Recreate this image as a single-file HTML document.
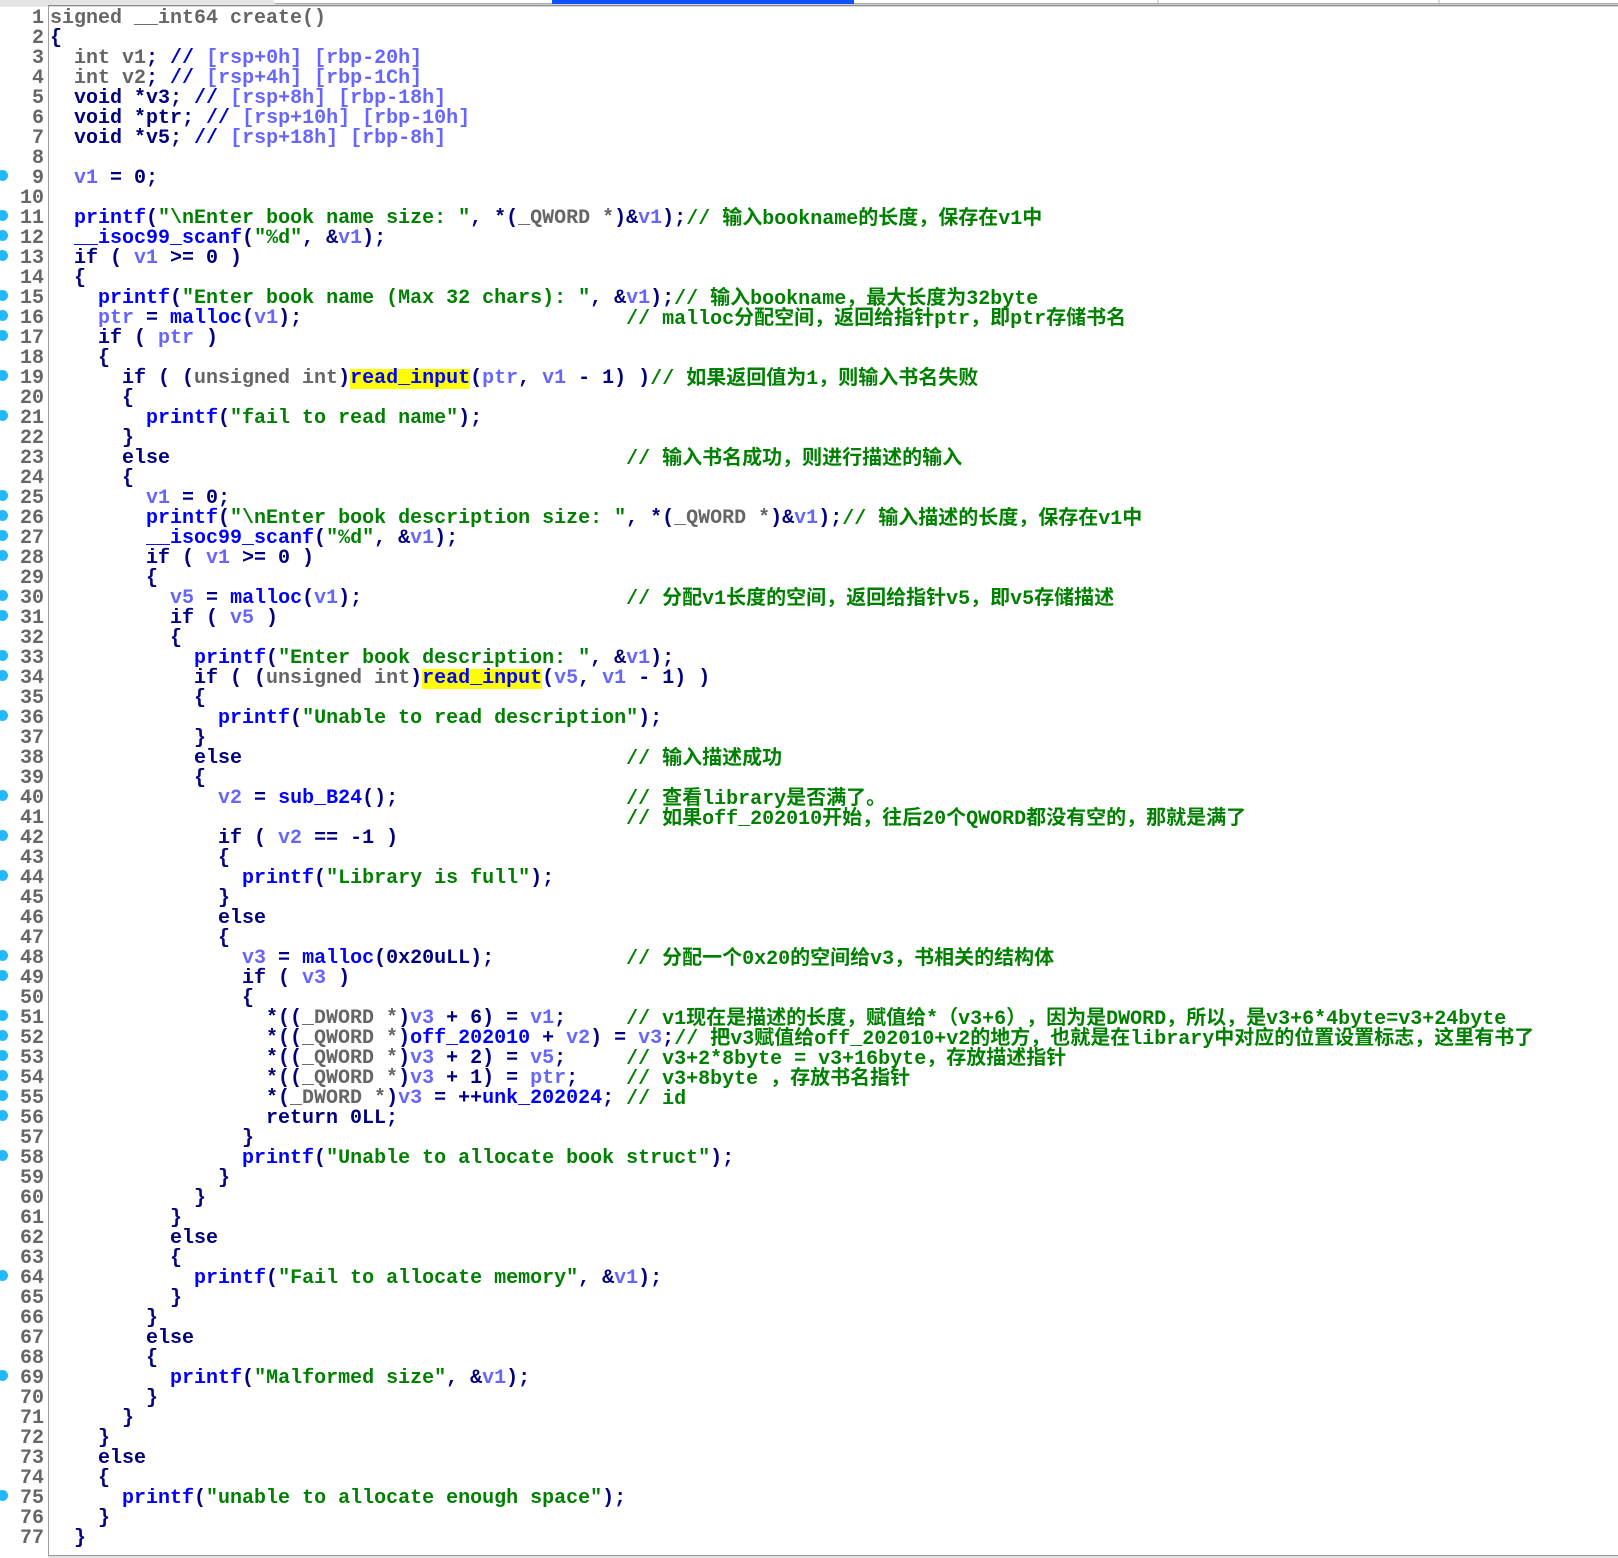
<!DOCTYPE html>
<html lang="zh">
<head>
<meta charset="utf-8">
<title>create</title>
<style>
html,body{margin:0;padding:0;background:#fff}
body{width:1618px;height:1558px;position:relative;overflow:hidden;font:bold 20px/20px "Liberation Mono","Noto Sans CJK SC",monospace;color:#000080;text-spacing-trim:space-all;font-kerning:none}
.bar{position:absolute;left:0;top:0;background:#e4e4e4}
.tab{position:absolute;height:4px;top:0}
.h{position:absolute;left:0;width:1618px;height:1px}
.sep{position:absolute;top:0;width:2px;height:3px;background:#ddd}
.gut{position:absolute;left:48px;top:6px;width:1px;height:1549px;background:#a0a0a0}
.bot{position:absolute;left:48px;top:1555px;width:1570px;height:3px;background:#e2e2e2;border-top:1px solid #999;box-sizing:border-box}
#c{position:absolute;left:50px;top:9px;width:1568px}
p{margin:0;height:20px;line-height:20px;white-space:pre;position:relative}
p>em{position:absolute;left:-50px;width:44px;text-align:right;font-style:normal;color:#666}
.d::before{content:"";position:absolute;left:-53px;top:1px;width:11px;height:11px;border-radius:50%;background:#22b8fb}
i{font-style:normal}
.g{color:#666;font-weight:bold}
.b{color:#0000ff}
.v{color:#6666ff}
.s{color:#008000}
.c{position:relative;top:1px}
.k{color:#0000cc}
.y{background:#ffff00;display:inline-block;height:20px;line-height:20px;vertical-align:top}
</style>
</head>
<body>
<div class="h" style="top:3px;background:#a8a8a8"></div>
<div class="h" style="top:4px;background:#d0d0d0"></div>
<div class="h" style="top:5px;background:#8c8c8c"></div>
<div class="h" style="top:6px;background:#d8d8d8"></div>
<div class="bar" style="width:48px;height:7px"></div>
<div class="bar" style="width:275px;height:5px;border-top-right-radius:3px"></div>
<div class="tab" style="left:552px;width:302px;background:#0f52ff"></div>
<div class="sep" style="left:1157px"></div>
<div class="sep" style="left:1438px"></div>
<div class="gut"></div>
<div class="bot"></div>
<div id="c">
<p><em>1</em><i class="g">signed __int64 create()</i></p>
<p><em>2</em>{</p>
<p><em>3</em>  <i class="g">int v1</i>; <i class="k">//</i> <i class="v">[rsp+0h] [rbp-20h]</i></p>
<p><em>4</em>  <i class="g">int v2</i>; <i class="k">//</i> <i class="v">[rsp+4h] [rbp-1Ch]</i></p>
<p><em>5</em>  void *v3; <i class="k">//</i> <i class="v">[rsp+8h] [rbp-18h]</i></p>
<p><em>6</em>  void *ptr; <i class="k">//</i> <i class="v">[rsp+10h] [rbp-10h]</i></p>
<p><em>7</em>  void *v5; <i class="k">//</i> <i class="v">[rsp+18h] [rbp-8h]</i></p>
<p><em>8</em></p>
<p class="d"><em>9</em>  <i class="v">v1</i> = 0;</p>
<p><em>10</em></p>
<p class="d"><em>11</em>  <i class="b">printf</i>(<i class="s">"\nEnter book name size: "</i>, *(<i class="g">_QWORD *</i>)&amp;<i class="v">v1</i>);<i class="s c">// 输入bookname的长度，保存在v1中</i></p>
<p class="d"><em>12</em>  <i class="b">__isoc99_scanf</i>(<i class="s">"%d"</i>, &amp;<i class="v">v1</i>);</p>
<p class="d"><em>13</em>  if ( <i class="v">v1</i> &gt;= 0 )</p>
<p><em>14</em>  {</p>
<p class="d"><em>15</em>    <i class="b">printf</i>(<i class="s">"Enter book name (Max 32 chars): "</i>, &amp;<i class="v">v1</i>);<i class="s c">// 输入bookname，最大长度为32byte</i></p>
<p class="d"><em>16</em>    <i class="v">ptr</i> = <i class="b">malloc</i>(<i class="v">v1</i>);                           <i class="s c">// malloc分配空间，返回给指针ptr，即ptr存储书名</i></p>
<p class="d"><em>17</em>    if ( <i class="v">ptr</i> )</p>
<p><em>18</em>    {</p>
<p class="d"><em>19</em>      if ( (<i class="g">unsigned int</i>)<i class="b y">read_input</i>(<i class="v">ptr</i>, <i class="v">v1</i> - 1) )<i class="s c">// 如果返回值为1，则输入书名失败</i></p>
<p><em>20</em>      {</p>
<p class="d"><em>21</em>        <i class="b">printf</i>(<i class="s">"fail to read name"</i>);</p>
<p><em>22</em>      }</p>
<p><em>23</em>      else                                      <i class="s c">// 输入书名成功，则进行描述的输入</i></p>
<p><em>24</em>      {</p>
<p class="d"><em>25</em>        <i class="v">v1</i> = 0;</p>
<p class="d"><em>26</em>        <i class="b">printf</i>(<i class="s">"\nEnter book description size: "</i>, *(<i class="g">_QWORD *</i>)&amp;<i class="v">v1</i>);<i class="s c">// 输入描述的长度，保存在v1中</i></p>
<p class="d"><em>27</em>        <i class="b">__isoc99_scanf</i>(<i class="s">"%d"</i>, &amp;<i class="v">v1</i>);</p>
<p class="d"><em>28</em>        if ( <i class="v">v1</i> &gt;= 0 )</p>
<p><em>29</em>        {</p>
<p class="d"><em>30</em>          <i class="v">v5</i> = <i class="b">malloc</i>(<i class="v">v1</i>);                      <i class="s c">// 分配v1长度的空间，返回给指针v5，即v5存储描述</i></p>
<p class="d"><em>31</em>          if ( <i class="v">v5</i> )</p>
<p><em>32</em>          {</p>
<p class="d"><em>33</em>            <i class="b">printf</i>(<i class="s">"Enter book description: "</i>, &amp;<i class="v">v1</i>);</p>
<p class="d"><em>34</em>            if ( (<i class="g">unsigned int</i>)<i class="b y">read_input</i>(<i class="v">v5</i>, <i class="v">v1</i> - 1) )</p>
<p><em>35</em>            {</p>
<p class="d"><em>36</em>              <i class="b">printf</i>(<i class="s">"Unable to read description"</i>);</p>
<p><em>37</em>            }</p>
<p><em>38</em>            else                                <i class="s c">// 输入描述成功</i></p>
<p><em>39</em>            {</p>
<p class="d"><em>40</em>              <i class="v">v2</i> = <i class="b">sub_B24</i>();                   <i class="s c">// 查看library是否满了。</i></p>
<p><em>41</em>                                                <i class="s c">// 如果off_202010开始，往后20个QWORD都没有空的，那就是满了</i></p>
<p class="d"><em>42</em>              if ( <i class="v">v2</i> == -1 )</p>
<p><em>43</em>              {</p>
<p class="d"><em>44</em>                <i class="b">printf</i>(<i class="s">"Library is full"</i>);</p>
<p><em>45</em>              }</p>
<p><em>46</em>              else</p>
<p><em>47</em>              {</p>
<p class="d"><em>48</em>                <i class="v">v3</i> = <i class="b">malloc</i>(0x20uLL);           <i class="s c">// 分配一个0x20的空间给v3，书相关的结构体</i></p>
<p class="d"><em>49</em>                if ( <i class="v">v3</i> )</p>
<p><em>50</em>                {</p>
<p class="d"><em>51</em>                  *((<i class="g">_DWORD *</i>)<i class="v">v3</i> + 6) = <i class="v">v1</i>;     <i class="s c">// v1现在是描述的长度，赋值给*（v3+6），因为是DWORD，所以，是v3+6*4byte=v3+24byte</i></p>
<p class="d"><em>52</em>                  *((<i class="g">_QWORD *</i>)<i class="b">off_202010</i> + <i class="v">v2</i>) = <i class="v">v3</i>;<i class="s c">// 把v3赋值给off_202010+v2的地方，也就是在library中对应的位置设置标志，这里有书了</i></p>
<p class="d"><em>53</em>                  *((<i class="g">_QWORD *</i>)<i class="v">v3</i> + 2) = <i class="v">v5</i>;     <i class="s c">// v3+2*8byte = v3+16byte，存放描述指针</i></p>
<p class="d"><em>54</em>                  *((<i class="g">_QWORD *</i>)<i class="v">v3</i> + 1) = <i class="v">ptr</i>;    <i class="s c">// v3+8byte ，存放书名指针</i></p>
<p class="d"><em>55</em>                  *(<i class="g">_DWORD *</i>)<i class="v">v3</i> = ++<i class="b">unk_202024</i>; <i class="s c">// id</i></p>
<p class="d"><em>56</em>                  return 0LL;</p>
<p><em>57</em>                }</p>
<p class="d"><em>58</em>                <i class="b">printf</i>(<i class="s">"Unable to allocate book struct"</i>);</p>
<p><em>59</em>              }</p>
<p><em>60</em>            }</p>
<p><em>61</em>          }</p>
<p><em>62</em>          else</p>
<p><em>63</em>          {</p>
<p class="d"><em>64</em>            <i class="b">printf</i>(<i class="s">"Fail to allocate memory"</i>, &amp;<i class="v">v1</i>);</p>
<p><em>65</em>          }</p>
<p><em>66</em>        }</p>
<p><em>67</em>        else</p>
<p><em>68</em>        {</p>
<p class="d"><em>69</em>          <i class="b">printf</i>(<i class="s">"Malformed size"</i>, &amp;<i class="v">v1</i>);</p>
<p><em>70</em>        }</p>
<p><em>71</em>      }</p>
<p><em>72</em>    }</p>
<p><em>73</em>    else</p>
<p><em>74</em>    {</p>
<p class="d"><em>75</em>      <i class="b">printf</i>(<i class="s">"unable to allocate enough space"</i>);</p>
<p><em>76</em>    }</p>
<p><em>77</em>  }</p>
</div>
</body>
</html>
